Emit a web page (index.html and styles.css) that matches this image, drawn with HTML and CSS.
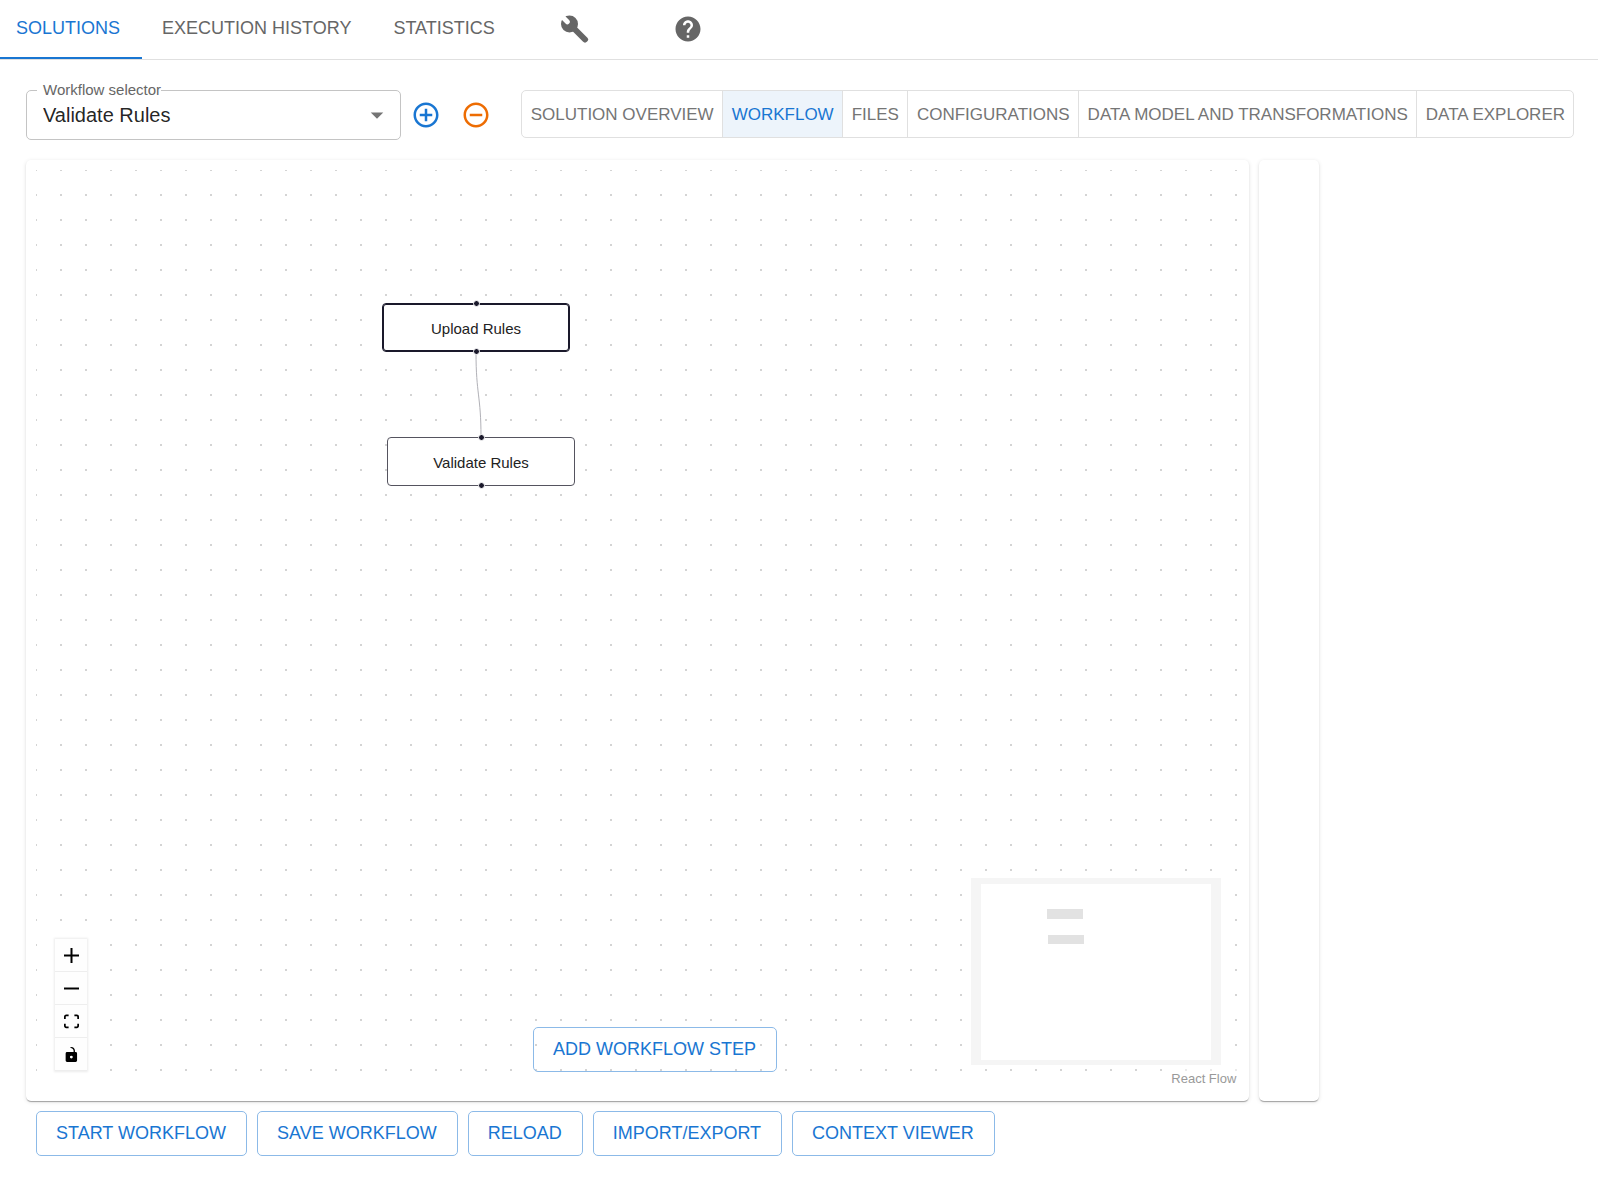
FILE: index.html
```html
<!DOCTYPE html>
<html lang="en">
<head>
<meta charset="utf-8">
<meta name="viewport" content="width=device-width, initial-scale=1">
<title>Workflow</title>
<link rel="stylesheet" href="styles.css">
</head>
<body>
<header class="tabs" role="tablist">
  <button class="tab tab-active" role="tab" aria-selected="true">SOLUTIONS</button>
  <button class="tab" role="tab">EXECUTION HISTORY</button>
  <button class="tab" role="tab">STATISTICS</button>
  <button class="tab tab-icon" role="tab" aria-label="Settings">
    <svg class="wrench" viewBox="0 0 30 30">
      <circle cx="10.500" cy="10" r="8.500"/>
      <path class="wrench-handle" d="M11 10.500L26 25.500"/>
      <path class="wrench-notch" d="M1 .5L8.300 7.800"/>
    </svg>
  </button>
  <button class="tab tab-icon" role="tab" aria-label="Help">
    <svg viewBox="0 0 24 24"><path d="M12 2C6.480 2 2 6.480 2 12s4.480 10 10 10 10-4.480 10-10S17.520 2 12 2zm1 17h-2v-2h2v2zm2.070-7.750l-.9.920C13.450 12.900 13 13.500 13 15h-2v-.5c0-1.100.45-2.100 1.170-2.830l1.240-1.260c.37-.36.59-.86.59-1.410 0-1.100-.9-2-2-2s-2 .9-2 2H8c0-2.210 1.790-4 4-4s4 1.790 4 4c0 .88-.36 1.680-.93 2.250z"/></svg>
  </button>
</header>

<main class="page">
  <div class="toolbar">
    <div class="field">
      <label class="field-label" for="workflow">Workflow selector</label>
      <select class="field-select" id="workflow"><option>Validate Rules</option></select>
      <svg class="field-arrow" viewBox="0 0 24 24"><path d="M7 10l5 5 5-5z"/></svg>
    </div>
    <button class="round add" aria-label="Add workflow">
      <svg viewBox="0 0 24 24"><path d="M13 7h-2v4H7v2h4v4h2v-4h4v-2h-4V7zm-1-5C6.480 2 2 6.480 2 12s4.480 10 10 10 10-4.480 10-10S17.520 2 12 2zm0 18c-4.410 0-8-3.590-8-8s3.590-8 8-8 8 3.590 8 8-3.590 8-8 8z"/></svg>
    </button>
    <button class="round remove" aria-label="Remove workflow">
      <svg viewBox="0 0 24 24"><path d="M7 11v2h10v-2H7zm5-9C6.480 2 2 6.480 2 12s4.480 10 10 10 10-4.480 10-10S17.520 2 12 2zm0 18c-4.410 0-8-3.590-8-8s3.590-8 8-8 8 3.590 8 8-3.590 8-8 8z"/></svg>
    </button>
    <div class="toggles">
      <button class="toggle">SOLUTION OVERVIEW</button>
      <button class="toggle toggle-on" aria-pressed="true">WORKFLOW</button>
      <button class="toggle">FILES</button>
      <button class="toggle">CONFIGURATIONS</button>
      <button class="toggle">DATA MODEL AND TRANSFORMATIONS</button>
      <button class="toggle">DATA EXPLORER</button>
    </div>
  </div>

  <div class="panels">
    <section class="paper">
      <div class="canvas">
        <svg class="edges"><path d="M440 182 C440 225 445 225 445 267"/></svg>
        <div class="node node-upload node-selected">Upload Rules<span class="handle handle-top"></span><span class="handle handle-bottom"></span></div>
        <div class="node node-validate">Validate Rules<span class="handle handle-top"></span><span class="handle handle-bottom"></span></div>

        <div class="controls">
          <button class="control" aria-label="Zoom in"><svg viewBox="0 0 32 32"><path d="M32 18.133H18.133V32h-4.266V18.133H0v-4.266h13.867V0h4.266v13.867H32z"/></svg></button>
          <button class="control" aria-label="Zoom out"><svg viewBox="0 0 32 32"><path d="M0 13.900h32v4.200H0z"/></svg></button>
          <button class="control" aria-label="Fit view"><svg viewBox="0 0 32 30"><path d="M3.692 4.630c0-.53.4-.938.939-.938h5.215V0H4.708C2.130 0 0 2.054 0 4.630v5.216h3.692V4.631zM27.354 0h-5.200v3.692h5.170c.53 0 .984.4.984.939v5.215H32V4.631A4.624 4.624 0 0027.354 0zm.954 24.830c0 .532-.4.940-.939.940h-5.215v3.768h5.215c2.577 0 4.631-2.130 4.631-4.707v-5.139h-3.692v5.139zm-23.677.940c-.531 0-.939-.4-.939-.940v-5.138H0v5.139c0 2.577 2.130 4.707 4.708 4.707h5.138V25.770H4.631z"/></svg></button>
          <button class="control" aria-label="Toggle interactivity"><svg viewBox="0 0 25 32"><path d="M21.333 10.667H19.810V7.619C19.810 3.429 16.380 0 12.190 0c-4.114 1.828-1.370 2.133.305 2.438 1.676.305 4.420 2.590 4.420 5.181v3.048H3.047A3.056 3.056 0 000 13.714v15.238A3.056 3.056 0 003.048 32h18.285a3.056 3.056 0 003.048-3.048V13.714a3.056 3.056 0 00-3.048-3.047zM12.190 24.533a3.056 3.056 0 01-3.047-3.047 3.056 3.056 0 013.047-3.048 3.056 3.056 0 013.048 3.048 3.056 3.056 0 01-3.048 3.047z"/></svg></button>
        </div>

        <button class="btn add-step">ADD WORKFLOW STEP</button>

        <svg class="minimap" viewBox="0 0 250 187" shape-rendering="crispEdges">
          <rect class="mini-node" x="76" y="31" width="36" height="10"/>
          <rect class="mini-node" x="77" y="57" width="36" height="9"/>
          <path class="mini-mask" fill-rule="evenodd" d="M0 0H250V187H0zM10 6V182H240V6z"/>
        </svg>
        <a class="credit" href="#">React Flow</a>
      </div>
    </section>
    <aside class="paper"></aside>
  </div>

  <div class="actions">
    <button class="btn">START WORKFLOW</button>
    <button class="btn">SAVE WORKFLOW</button>
    <button class="btn">RELOAD</button>
    <button class="btn">IMPORT/EXPORT</button>
    <button class="btn">CONTEXT VIEWER</button>
  </div>
</main>
</body>
</html>
```
FILE: styles.css
```css
* { box-sizing: border-box; }

body {
  margin: 0;
  background: #fff;
  color: rgba(0, 0, 0, .87);
  font-family: "Liberation Sans", Arial, sans-serif;
}

button, select {
  margin: 0;
  padding: 0;
  border: 0;
  background: none;
  font-family: inherit;
  color: inherit;
}

svg { display: block; fill: currentColor; }

/* Top navigation */
.tabs {
  display: flex;
  height: 60px;
  border-bottom: 1px solid #e0e0e0;
}

.tab {
  padding: 0 22px 2px 20px;
  border-bottom: 2px solid transparent;
  color: #666;
  font-size: 18px;
  line-height: 22px;
}

.tab:first-child { padding-left: 16px; }
.tab-active { color: #1976d2; border-bottom-color: #1976d2; }

.tab-icon {
  display: flex;
  align-items: center;
  justify-content: center;
  width: 114px;
  padding: 0;
}

.tab-icon svg { width: 30px; height: 30px; }

.wrench-handle, .wrench-notch { fill: none; stroke-linecap: round; }
.wrench-handle { stroke: currentColor; stroke-width: 6; }
.wrench-notch { stroke: #fff; stroke-width: 5; }

/* Selector and view switch */
.page { padding: 30px 24px 30px 26px; }

.toolbar {
  display: flex;
  align-items: flex-start;
  margin-bottom: 20px;
}

.field {
  position: relative;
  width: 375px;
  height: 50px;
}

.field-label {
  position: absolute;
  top: -9px;
  left: 11px;
  padding-left: 6px;
  background: #fff;
  color: #666;
  font-size: 15px;
  line-height: 18px;
}

.field-select {
  width: 100%;
  height: 50px;
  padding: 0 40px 0 16px;
  border: 1px solid #c4c4c4;
  border-radius: 5px;
  appearance: none;
  font-size: 20px;
}

.field-arrow {
  position: absolute;
  top: 10px;
  right: 9px;
  width: 30px;
  height: 30px;
  color: #757575;
  pointer-events: none;
}

.round { padding: 10px; }
.round svg { width: 30px; height: 30px; }
.add { color: #1976d2; }
.remove { color: #ed6c02; }

.toggles {
  display: flex;
  margin-left: auto;
  border: 1px solid #e0e0e0;
  border-radius: 5px;
}

.toggle {
  height: 46px;
  padding: 1px 8px 0 9px;
  color: #757575;
  font-size: 17px;
  white-space: nowrap;
}

.toggle + .toggle { border-left: 1px solid #e0e0e0; }
.toggle-on { background: #edf4fb; color: #1976d2; }

/* Panels */
.panels {
  display: grid;
  grid-template-columns: 5fr 60px 1fr;
  gap: 10px;
}

.paper {
  padding: 10px;
  border-radius: 5px;
  background: #fff;
  box-shadow: 0 2px 1px -1px rgba(0, 0, 0, .2), 0 1px 1px rgba(0, 0, 0, .14), 0 1px 4px rgba(0, 0, 0, .12);
}

.canvas {
  position: relative;
  height: calc(100vh - 279px);
  min-height: 500px;
  overflow: hidden;
  background: conic-gradient(from 90deg at 23px 23px, #d4d4d4 90deg, transparent 0) 1px 1px / 25px 25px;
}

.edges {
  position: absolute;
  inset: 0;
  width: 100%;
  height: 100%;
  fill: none;
  stroke: #b1b1b7;
}

.node {
  position: absolute;
  width: 188px;
  height: 49px;
  border: 1px solid #55545f;
  border-radius: 4px;
  background: #fff;
  color: #222;
  font-size: 15px;
  line-height: 49px;
  text-align: center;
}

.node-selected {
  border-color: #1a192b;
  box-shadow: inset 0 0 0 1px #1a192b;
}

.node-upload { left: 346px; top: 133px; }
.node-validate { left: 351px; top: 267px; }

.handle {
  position: absolute;
  left: 50%;
  width: 7px;
  height: 7px;
  margin-left: -3px;
  border: 1px solid #fff;
  border-radius: 50%;
  background: #1a192b;
}

.handle-top { top: -4px; }
.handle-bottom { bottom: -4px; }

.controls {
  position: absolute;
  left: 19px;
  bottom: 20px;
  width: 32px;
  box-shadow: 0 0 2px 1px rgba(0, 0, 0, .08);
}

.control {
  display: grid;
  place-items: center;
  width: 32px;
  height: 33px;
  border-bottom: 1px solid #eee;
  background: #fefefe;
  color: #000;
}

.control svg { width: 15px; height: 15px; }

.btn {
  height: 45px;
  padding: 0 20px 0 19px;
  border: 1px solid #8cbae8;
  border-radius: 5px;
  color: #1976d2;
  font-size: 18px;
  white-space: nowrap;
}

.add-step {
  position: absolute;
  left: 497px;
  bottom: 19px;
}

.minimap {
  position: absolute;
  right: 18px;
  bottom: 26px;
  width: 250px;
  height: 187px;
  background: #fff;
}

.mini-node { fill: #e2e2e2; }
.mini-mask { fill: #f5f5f5; }

.credit {
  position: absolute;
  right: 0;
  bottom: 0;
  padding: 4px 3px 2px;
  background: rgba(255, 255, 255, .5);
  color: #999;
  font-size: 13px;
  line-height: 20px;
  text-decoration: none;
}

.actions {
  display: flex;
  gap: 10px;
  padding: 10px;
}
```
